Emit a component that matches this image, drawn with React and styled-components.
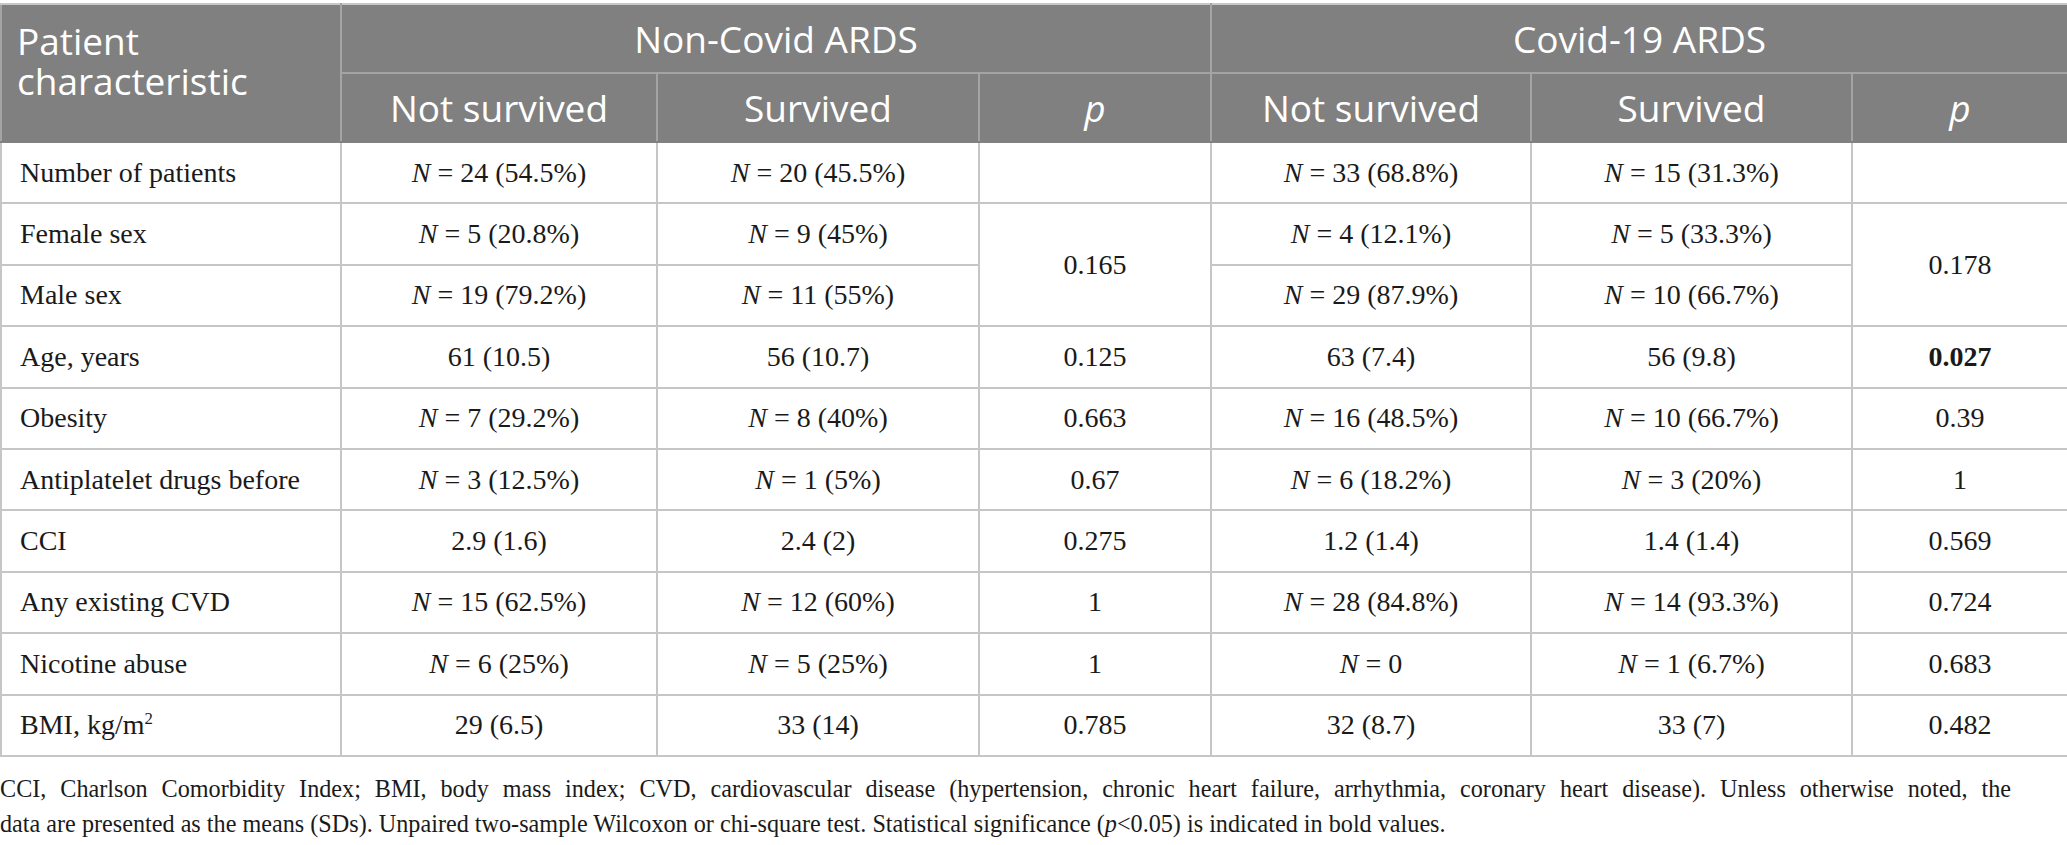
import React from "react";
import styled, { createGlobalStyle } from "styled-components";

const Global = createGlobalStyle`
  html, body { margin: 0; padding: 0; background: #ffffff; }
  body { width: 2067px; }
`;

const Page = styled.div`
  width: 2067px;
  padding-top: 3px;
`;

const Table = styled.table`
  width: 2067px;
  table-layout: fixed;
  border-collapse: collapse;
  border: 2px solid #c8c8c8;
`;

const Col = styled.col`
  width: ${(p) => p.$w}px;
`;

const HeadRow = styled.tr`
  height: ${(p) => p.$h}px;
`;

const HeadCell = styled.th`
  background: #808080;
  color: #ffffff;
  font-family: "Open Sans", "Liberation Sans", sans-serif;
  font-weight: 400;
  font-size: 37px;
  line-height: 40px;
  text-align: ${(p) => p.$align || "center"};
  vertical-align: ${(p) => p.$valign || "middle"};
  padding: ${(p) => p.$pad || "0 10px"};
  border: 2px solid #a4a4a4;
  border-bottom-color: ${(p) => (p.$last ? "#808080" : "#a4a4a4")};
  border-top-color: #c8c8c8;
`;

const Row = styled.tr`
  height: 61.4px;
`;

const LabelCell = styled.td`
  font-family: "Liberation Serif", "Times New Roman", serif;
  font-size: 28px;
  color: #1a1a1a;
  text-align: left;
  vertical-align: middle;
  padding: 0 18px;
  border: 2px solid #c6c6c6;
  white-space: nowrap;
`;

const ValueCell = styled.td`
  font-family: "Liberation Serif", "Times New Roman", serif;
  font-size: 28px;
  color: #1a1a1a;
  font-weight: ${(p) => (p.$bold ? 700 : 400)};
  text-align: center;
  vertical-align: middle;
  padding: 0 8px;
  border: 2px solid #c6c6c6;
  white-space: nowrap;
`;

const Footnote = styled.div`
  margin-top: 14px;
  width: 2011px;
  font-family: "Liberation Serif", "Times New Roman", serif;
  font-size: 24.2px;
  line-height: 35px;
  color: #1a1a1a;
`;

const FootLine = styled.div`
  white-space: nowrap;
  text-align: ${(p) => (p.$justify ? "justify" : "left")};
  text-align-last: ${(p) => (p.$justify ? "justify" : "auto")};
  ${(p) => (p.$justify ? "white-space: normal;" : "")}
`;

const Sup = styled.sup`
  font-size: 0.6em;
  vertical-align: 0.6em;
  line-height: 0;
`;

const Val = ({ v }) => {
  if (typeof v === "string" && v.startsWith("N = ")) {
    return (
      <>
        <i>N</i>
        {" = " + v.slice(4)}
      </>
    );
  }
  return v;
};

const rows = [
  { label: "Number of patients", a: ["N = 24 (54.5%)", "N = 20 (45.5%)", ""], b: ["N = 33 (68.8%)", "N = 15 (31.3%)", ""] },
  { label: "Female sex", a: ["N = 5 (20.8%)", "N = 9 (45%)", "0.165"], b: ["N = 4 (12.1%)", "N = 5 (33.3%)", "0.178"], span: true },
  { label: "Male sex", a: ["N = 19 (79.2%)", "N = 11 (55%)"], b: ["N = 29 (87.9%)", "N = 10 (66.7%)"] },
  { label: "Age, years", a: ["61 (10.5)", "56 (10.7)", "0.125"], b: ["63 (7.4)", "56 (9.8)", "0.027"], boldB: true },
  { label: "Obesity", a: ["N = 7 (29.2%)", "N = 8 (40%)", "0.663"], b: ["N = 16 (48.5%)", "N = 10 (66.7%)", "0.39"] },
  { label: "Antiplatelet drugs before", a: ["N = 3 (12.5%)", "N = 1 (5%)", "0.67"], b: ["N = 6 (18.2%)", "N = 3 (20%)", "1"] },
  { label: "CCI", a: ["2.9 (1.6)", "2.4 (2)", "0.275"], b: ["1.2 (1.4)", "1.4 (1.4)", "0.569"] },
  { label: "Any existing CVD", a: ["N = 15 (62.5%)", "N = 12 (60%)", "1"], b: ["N = 28 (84.8%)", "N = 14 (93.3%)", "0.724"] },
  { label: "Nicotine abuse", a: ["N = 6 (25%)", "N = 5 (25%)", "1"], b: ["N = 0", "N = 1 (6.7%)", "0.683"] },
  { label: <>BMI, kg/m<Sup>2</Sup></>, a: ["29 (6.5)", "33 (14)", "0.785"], b: ["32 (8.7)", "33 (7)", "0.482"] },
];

const widths = [340, 316, 322, 232, 320, 321, 216];

function Group({ vals, span, bold }) {
  return (
    <>
      <ValueCell><Val v={vals[0]} /></ValueCell>
      <ValueCell><Val v={vals[1]} /></ValueCell>
      {vals.length > 2 && (
        <ValueCell rowSpan={span ? 2 : 1} $bold={bold}>
          {vals[2]}
        </ValueCell>
      )}
    </>
  );
}

export default function App() {
  return (
    <Page>
      <Global />
      <Table>
        <colgroup>
          {widths.map((w, i) => (
            <Col key={i} $w={w} />
          ))}
        </colgroup>
        <thead>
          <HeadRow $h={69}>
            <HeadCell rowSpan={2} $align="left" $valign="top" $pad="16px 15px 0 15px" $last>
              Patient characteristic
            </HeadCell>
            <HeadCell colSpan={3}>Non-Covid ARDS</HeadCell>
            <HeadCell colSpan={3}>Covid-19 ARDS</HeadCell>
          </HeadRow>
          <HeadRow $h={69}>
            <HeadCell $last>Not survived</HeadCell>
            <HeadCell $last>Survived</HeadCell>
            <HeadCell $last><i>p</i></HeadCell>
            <HeadCell $last>Not survived</HeadCell>
            <HeadCell $last>Survived</HeadCell>
            <HeadCell $last><i>p</i></HeadCell>
          </HeadRow>
        </thead>
        <tbody>
          {rows.map((r, i) => (
            <Row key={i}>
              <LabelCell>{r.label}</LabelCell>
              <Group vals={r.a} span={r.span} />
              <Group vals={r.b} span={r.span} bold={r.boldB} />
            </Row>
          ))}
        </tbody>
      </Table>
      <Footnote>
        <FootLine $justify>
          CCI, Charlson Comorbidity Index; BMI, body mass index; CVD, cardiovascular disease (hypertension, chronic heart failure, arrhythmia, coronary heart disease). Unless otherwise noted, the
        </FootLine>
        <FootLine>
          data are presented as the means (SDs). Unpaired two-sample Wilcoxon or chi-square test. Statistical significance (<i>p</i>&lt;0.05) is indicated in bold values.
        </FootLine>
      </Footnote>
    </Page>
  );
}
